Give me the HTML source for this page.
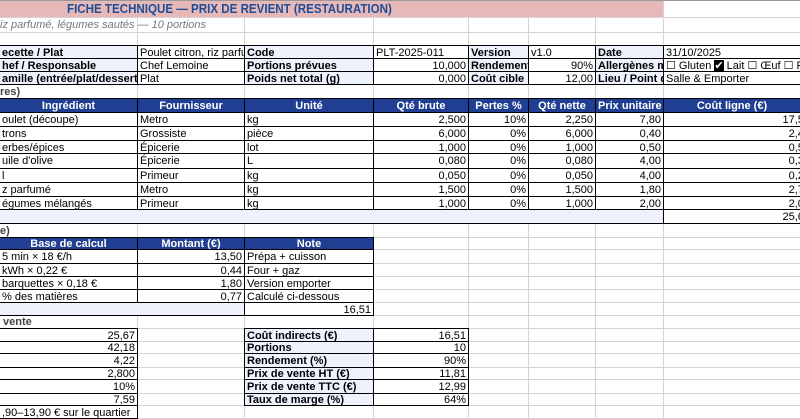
<!DOCTYPE html>
<html><head><meta charset="utf-8"><style>
body{margin:0;width:800px;height:419px;overflow:hidden;background:#fff;position:relative;font-family:"Liberation Sans",sans-serif;}
.v{position:absolute;top:0;height:419px;width:1px;background:#d4d4d4}
.h{position:absolute;left:0;width:800px;height:1px;background:#d4d4d4}
.c{position:absolute;box-sizing:border-box;border:1px solid #000;font-size:11px;line-height:12px;padding:1px 2px 0;white-space:nowrap;overflow:hidden;background:#fff;color:#000}
.l{background:#eef2fd;font-weight:bold}
.r{text-align:right}
.hd{background:#203f92;color:#fff;font-weight:bold;text-align:center}
.t{position:absolute;font-size:11px;white-space:nowrap}
</style></head><body>
<div class="v" style="left:137px"></div><div class="v" style="left:244px"></div><div class="v" style="left:373px"></div><div class="v" style="left:468px"></div><div class="v" style="left:528px"></div><div class="v" style="left:595px"></div><div class="v" style="left:663px"></div>
<div class="h" style="top:17px"></div><div class="h" style="top:32px"></div><div class="h" style="top:45px"></div><div class="h" style="top:84px"></div><div class="h" style="top:98px"></div><div class="h" style="top:223px"></div><div class="h" style="top:237px"></div><div class="h" style="top:249px"></div><div class="h" style="top:263px"></div><div class="h" style="top:276px"></div><div class="h" style="top:289px"></div><div class="h" style="top:302px"></div><div class="h" style="top:315px"></div><div class="h" style="top:328px"></div><div class="h" style="top:341px"></div><div class="h" style="top:353px"></div><div class="h" style="top:367px"></div><div class="h" style="top:379px"></div><div class="h" style="top:393px"></div><div class="h" style="top:405px"></div><div class="h" style="top:418px"></div>
<div style="position:absolute;left:0;top:0;width:800px;height:1px;background:#999"></div>
<div style="position:absolute;left:0;top:1px;width:663px;height:16px;background:#e6b8b8"></div>
<div class="t" style="left:67px;top:1px;font-size:13px;font-weight:bold;color:#1f4d95;transform:scaleX(0.89);transform-origin:0 0">FICHE TECHNIQUE — PRIX DE REVIENT (RESTAURATION)</div>
<div class="t" style="left:0;top:19px;font-style:italic;color:#777">iz parfumé, légumes sautés — 10 portions</div>

<div class="c l" style="left:-1px;top:45px;width:139px;height:14px">ecette / Plat</div>
<div class="c" style="left:137px;top:45px;width:108px;height:14px">Poulet citron, riz parfumé</div>
<div class="c l" style="left:244px;top:45px;width:130px;height:14px">Code</div>
<div class="c" style="left:373px;top:45px;width:96px;height:14px">PLT-2025-011</div>
<div class="c l" style="left:468px;top:45px;width:61px;height:14px">Version</div>
<div class="c" style="left:528px;top:45px;width:68px;height:14px">v1.0</div>
<div class="c l" style="left:595px;top:45px;width:69px;height:14px">Date</div>
<div class="c" style="left:663px;top:45px;width:150px;height:14px">31/10/2025</div>

<div class="c l" style="left:-1px;top:58px;width:139px;height:14px">hef / Responsable</div>
<div class="c" style="left:137px;top:58px;width:108px;height:14px">Chef Lemoine</div>
<div class="c l" style="left:244px;top:58px;width:130px;height:14px">Portions prévues</div>
<div class="c r" style="left:373px;top:58px;width:96px;height:14px">10,000</div>
<div class="c l" style="left:468px;top:58px;width:61px;height:14px">Rendement</div>
<div class="c r" style="left:528px;top:58px;width:68px;height:14px">90%</div>
<div class="c l" style="left:595px;top:58px;width:69px;height:14px">Allergènes maj</div>
<div class="c" style="left:663px;top:58px;width:150px;height:14px">☐ Gluten <span style="background:#000;color:#fff">✔</span> Lait ☐ Œuf ☐ F</div>

<div class="c l" style="left:-1px;top:71px;width:139px;height:14px">amille (entrée/plat/dessert)</div>
<div class="c" style="left:137px;top:71px;width:108px;height:14px">Plat</div>
<div class="c l" style="left:244px;top:71px;width:130px;height:14px">Poids net total (g)</div>
<div class="c r" style="left:373px;top:71px;width:96px;height:14px">0,000</div>
<div class="c l" style="left:468px;top:71px;width:61px;height:14px">Coût cible</div>
<div class="c r" style="left:528px;top:71px;width:68px;height:14px">12,00</div>
<div class="c l" style="left:595px;top:71px;width:69px;height:14px">Lieu / Point de</div>
<div class="c" style="left:663px;top:71px;width:150px;height:14px">Salle &amp; Emporter</div>

<div class="t" style="left:0;top:86px;font-weight:bold;color:#444">res)</div>

<div class="c hd" style="left:-1px;top:98px;width:139px;height:15px">Ingrédient</div>
<div class="c hd" style="left:137px;top:98px;width:108px;height:15px">Fournisseur</div>
<div class="c hd" style="left:244px;top:98px;width:130px;height:15px">Unité</div>
<div class="c hd" style="left:373px;top:98px;width:96px;height:15px">Qté brute</div>
<div class="c hd" style="left:468px;top:98px;width:61px;height:15px">Pertes %</div>
<div class="c hd" style="left:528px;top:98px;width:68px;height:15px">Qté nette</div>
<div class="c hd" style="left:595px;top:98px;width:69px;height:15px">Prix unitaire (€)</div>
<div class="c hd" style="left:663px;top:98px;width:150px;height:15px;padding-right:14px">Coût ligne (€)</div>

<div class="c" style="left:-1px;top:112px;width:139px;height:15px">oulet (découpe)</div><div class="c" style="left:137px;top:112px;width:108px;height:15px">Metro</div><div class="c" style="left:244px;top:112px;width:130px;height:15px">kg</div><div class="c r" style="left:373px;top:112px;width:96px;height:15px">2,500</div><div class="c r" style="left:468px;top:112px;width:61px;height:15px">10%</div><div class="c r" style="left:528px;top:112px;width:68px;height:15px">2,250</div><div class="c r" style="left:595px;top:112px;width:69px;height:15px">7,80</div><div class="c r" style="left:663px;top:112px;width:150px;height:15px">17,55</div>
<div class="c" style="left:-1px;top:126px;width:139px;height:15px">trons</div><div class="c" style="left:137px;top:126px;width:108px;height:15px">Grossiste</div><div class="c" style="left:244px;top:126px;width:130px;height:15px">pièce</div><div class="c r" style="left:373px;top:126px;width:96px;height:15px">6,000</div><div class="c r" style="left:468px;top:126px;width:61px;height:15px">0%</div><div class="c r" style="left:528px;top:126px;width:68px;height:15px">6,000</div><div class="c r" style="left:595px;top:126px;width:69px;height:15px">0,40</div><div class="c r" style="left:663px;top:126px;width:150px;height:15px">2,40</div>
<div class="c" style="left:-1px;top:140px;width:139px;height:14px">erbes/épices</div><div class="c" style="left:137px;top:140px;width:108px;height:14px">Épicerie</div><div class="c" style="left:244px;top:140px;width:130px;height:14px">lot</div><div class="c r" style="left:373px;top:140px;width:96px;height:14px">1,000</div><div class="c r" style="left:468px;top:140px;width:61px;height:14px">0%</div><div class="c r" style="left:528px;top:140px;width:68px;height:14px">1,000</div><div class="c r" style="left:595px;top:140px;width:69px;height:14px">0,50</div><div class="c r" style="left:663px;top:140px;width:150px;height:14px">0,50</div>
<div class="c" style="left:-1px;top:153px;width:139px;height:16px">uile d'olive</div><div class="c" style="left:137px;top:153px;width:108px;height:16px">Épicerie</div><div class="c" style="left:244px;top:153px;width:130px;height:16px">L</div><div class="c r" style="left:373px;top:153px;width:96px;height:16px">0,080</div><div class="c r" style="left:468px;top:153px;width:61px;height:16px">0%</div><div class="c r" style="left:528px;top:153px;width:68px;height:16px">0,080</div><div class="c r" style="left:595px;top:153px;width:69px;height:16px">4,00</div><div class="c r" style="left:663px;top:153px;width:150px;height:16px">0,32</div>
<div class="c" style="left:-1px;top:168px;width:139px;height:15px">l</div><div class="c" style="left:137px;top:168px;width:108px;height:15px">Primeur</div><div class="c" style="left:244px;top:168px;width:130px;height:15px">kg</div><div class="c r" style="left:373px;top:168px;width:96px;height:15px">0,050</div><div class="c r" style="left:468px;top:168px;width:61px;height:15px">0%</div><div class="c r" style="left:528px;top:168px;width:68px;height:15px">0,050</div><div class="c r" style="left:595px;top:168px;width:69px;height:15px">4,00</div><div class="c r" style="left:663px;top:168px;width:150px;height:15px">0,20</div>
<div class="c" style="left:-1px;top:182px;width:139px;height:15px">z parfumé</div><div class="c" style="left:137px;top:182px;width:108px;height:15px">Metro</div><div class="c" style="left:244px;top:182px;width:130px;height:15px">kg</div><div class="c r" style="left:373px;top:182px;width:96px;height:15px">1,500</div><div class="c r" style="left:468px;top:182px;width:61px;height:15px">0%</div><div class="c r" style="left:528px;top:182px;width:68px;height:15px">1,500</div><div class="c r" style="left:595px;top:182px;width:69px;height:15px">1,80</div><div class="c r" style="left:663px;top:182px;width:150px;height:15px">2,70</div>
<div class="c" style="left:-1px;top:196px;width:139px;height:14px">égumes mélangés</div><div class="c" style="left:137px;top:196px;width:108px;height:14px">Primeur</div><div class="c" style="left:244px;top:196px;width:130px;height:14px">kg</div><div class="c r" style="left:373px;top:196px;width:96px;height:14px">1,000</div><div class="c r" style="left:468px;top:196px;width:61px;height:14px">0%</div><div class="c r" style="left:528px;top:196px;width:68px;height:14px">1,000</div><div class="c r" style="left:595px;top:196px;width:69px;height:14px">2,00</div><div class="c r" style="left:663px;top:196px;width:150px;height:14px">2,00</div>
<div class="c" style="left:-1px;top:209px;width:665px;height:15px;background:#eef2fd;border-left:0"></div>
<div class="c r" style="left:663px;top:209px;width:150px;height:15px">25,67</div>

<div class="t" style="left:0;top:225px;font-weight:bold;color:#444">e)</div>
<div class="c hd" style="left:-1px;top:237px;width:139px;height:13px;padding-top:0">Base de calcul</div>
<div class="c hd" style="left:137px;top:237px;width:108px;height:13px;padding-top:0">Montant (€)</div>
<div class="c hd" style="left:244px;top:237px;width:130px;height:13px;padding-top:0">Note</div>
<div class="c" style="left:-1px;top:249px;width:139px;height:15px">5 min × 18 €/h</div><div class="c r" style="left:137px;top:249px;width:108px;height:15px">13,50</div><div class="c" style="left:244px;top:249px;width:130px;height:15px">Prépa + cuisson</div>
<div class="c" style="left:-1px;top:263px;width:139px;height:14px">kWh × 0,22 €</div><div class="c r" style="left:137px;top:263px;width:108px;height:14px">0,44</div><div class="c" style="left:244px;top:263px;width:130px;height:14px">Four + gaz</div>
<div class="c" style="left:-1px;top:276px;width:139px;height:14px"> barquettes × 0,18 €</div><div class="c r" style="left:137px;top:276px;width:108px;height:14px">1,80</div><div class="c" style="left:244px;top:276px;width:130px;height:14px">Version emporter</div>
<div class="c" style="left:-1px;top:289px;width:139px;height:14px">% des matières</div><div class="c r" style="left:137px;top:289px;width:108px;height:14px">0,77</div><div class="c" style="left:244px;top:289px;width:130px;height:14px">Calculé ci-dessous</div>
<div class="c" style="left:-1px;top:302px;width:246px;height:14px;background:#eef2fd"></div>
<div class="c r" style="left:244px;top:302px;width:130px;height:14px">16,51</div>

<div class="t" style="left:3px;top:316px;font-weight:bold;color:#444">vente</div>
<div class="c r" style="left:-1px;top:328px;width:139px;height:14px">25,67</div>
<div class="c r" style="left:-1px;top:341px;width:139px;height:13px;padding-top:0">42,18</div>
<div class="c r" style="left:-1px;top:353px;width:139px;height:15px">4,22</div>
<div class="c r" style="left:-1px;top:367px;width:139px;height:13px;padding-top:0">2,800</div>
<div class="c r" style="left:-1px;top:379px;width:139px;height:15px">10%</div>
<div class="c r" style="left:-1px;top:393px;width:139px;height:13px;padding-top:0">7,59</div>
<div class="c" style="left:-1px;top:405px;width:139px;height:14px">,90–13,90 € sur le quartier</div>

<div class="c l" style="left:244px;top:328px;width:130px;height:14px">Coût indirects (€)</div><div class="c r" style="left:373px;top:328px;width:96px;height:14px">16,51</div>
<div class="c l" style="left:244px;top:341px;width:130px;height:13px;padding-top:0">Portions</div><div class="c r" style="left:373px;top:341px;width:96px;height:13px;padding-top:0">10</div>
<div class="c l" style="left:244px;top:353px;width:130px;height:15px">Rendement (%)</div><div class="c r" style="left:373px;top:353px;width:96px;height:15px">90%</div>
<div class="c l" style="left:244px;top:367px;width:130px;height:13px;padding-top:0">Prix de vente HT (€)</div><div class="c r" style="left:373px;top:367px;width:96px;height:13px;padding-top:0">11,81</div>
<div class="c l" style="left:244px;top:379px;width:130px;height:15px">Prix de vente TTC (€)</div><div class="c r" style="left:373px;top:379px;width:96px;height:15px">12,99</div>
<div class="c l" style="left:244px;top:393px;width:130px;height:13px;padding-top:0">Taux de marge (%)</div><div class="c r" style="left:373px;top:393px;width:96px;height:13px;padding-top:0">64%</div>
</body></html>
